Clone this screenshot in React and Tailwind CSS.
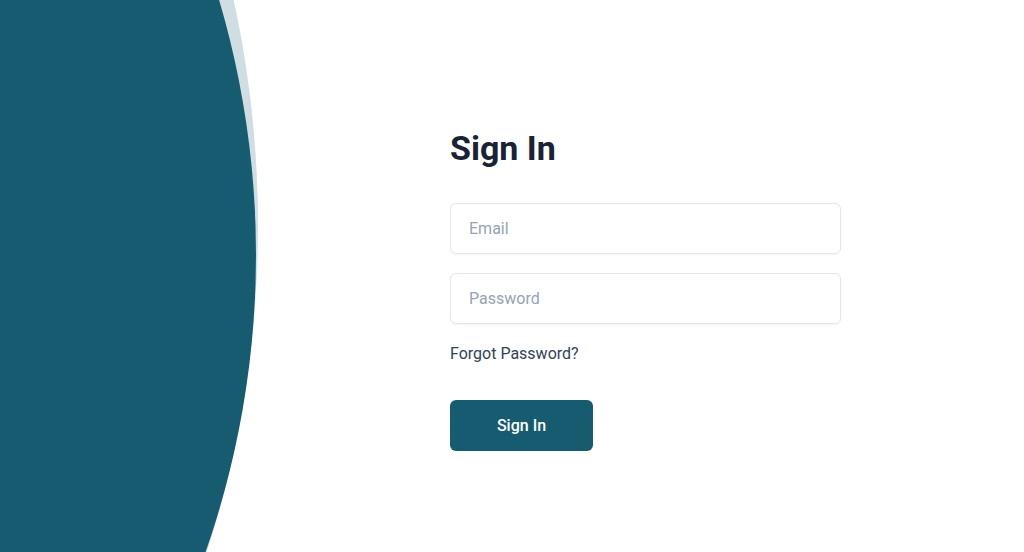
import { useState } from 'react'

function Curve() {
  return (
    <svg width="260" height="552" viewBox="0 0 260 552" className="block">
      <circle cx="-804" cy="226" r="1062" fill="#d0dde2" />
      <circle cx="-644" cy="255" r="900" fill="#165b70" />
    </svg>
  )
}

export default function App() {
  const [email, setEmail] = useState('')
  const [password, setPassword] = useState('')

  return (
    <div className="flex h-[552px] w-full overflow-hidden bg-white font-['Roboto',sans-serif]">
      <div className="w-[450px] shrink-0">
        <Curve />
      </div>
      <form onSubmit={e => e.preventDefault()} className="w-[391px] pt-[128px]">
        <h1 className="text-[34px] font-bold leading-10 text-[#1a2336]">Sign In</h1>
        <input
          value={email}
          onChange={e => setEmail(e.target.value)}
          placeholder="Email"
          className="mt-[35px] block h-[51px] w-full rounded-md border border-[#e2e6f0] px-[18px] text-base text-slate-700 shadow-[0_1px_2px_rgba(15,23,42,0.05)] outline-none placeholder:text-[#94a3b8]"
        />
        <input
          type="password"
          value={password}
          onChange={e => setPassword(e.target.value)}
          placeholder="Password"
          className="mt-[19px] block h-[51px] w-full rounded-md border border-[#e2e6f0] px-[18px] text-base text-slate-700 shadow-[0_1px_2px_rgba(15,23,42,0.05)] outline-none placeholder:text-[#94a3b8]"
        />
        <p className="mt-[18px] text-base leading-6 text-[#334155]">Forgot Password?</p>
        <button type="submit" className="mt-[34px] h-[51px] w-[143px] rounded-md bg-[#165b70] text-base font-medium text-white">
          Sign In
        </button>
      </form>
    </div>
  )
}
